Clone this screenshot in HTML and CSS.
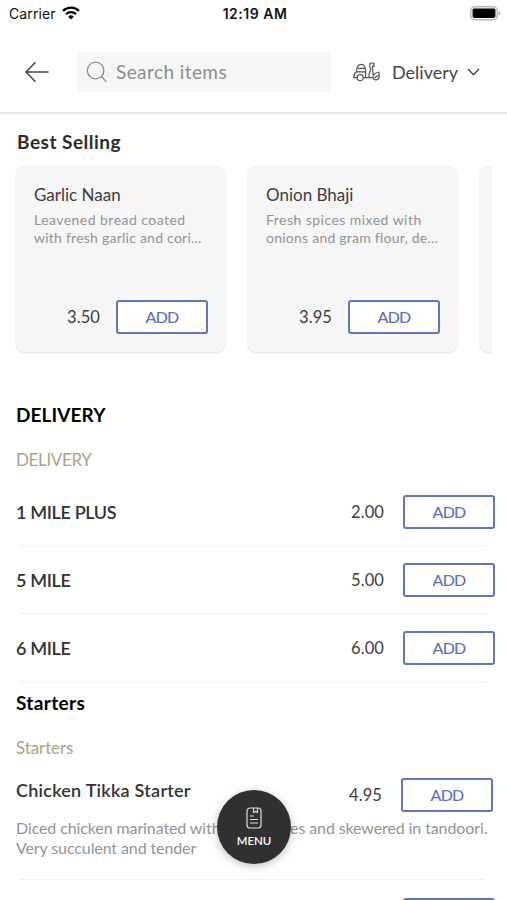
FILE: index.html
```html
<!DOCTYPE html>
<html lang="en">
<head>
<meta charset="utf-8">
<meta name="viewport" content="width=device-width, initial-scale=1">
<title>Menu</title>
<link rel="stylesheet" href="styles.css">
</head>
<body>
<div class="screen">
  <div class="status">
    <div class="carrier"><span>Carrier</span>
      <svg class="wifi" viewBox="0 0 18 14" width="18" height="14" fill="none" stroke="#000"><path d="M1 4.900a11.400 11.400 0 0 1 16 0" stroke-width="2.300"/><path d="M4 8.100a7.100 7.100 0 0 1 10 0" stroke-width="2.200"/><path d="M9 13.500 6.200 10.700a4 4 0 0 1 5.600 0z" fill="#000" stroke="none"/></svg>
    </div>
    <time class="clock">12:19 AM</time>
    <svg class="battery" viewBox="0 0 31 15" width="31" height="15"><rect x=".8" y=".8" width="26.400" height="13" rx="3.800" fill="#fff" stroke="#b8b8b8" stroke-width="1.500"/><rect x="2.600" y="2.500" width="22.800" height="9.600" rx="1.800"/><path d="M28.600 5v4.600q1.700-.7 1.700-2.300T28.600 5z" fill="#aaa"/></svg>
  </div>
  <header class="bar">
    <svg class="back" viewBox="0 0 26 22" width="26" height="22" fill="none" stroke="#444" stroke-width="1.400"><path d="M24.500 11H2M11.500 1.200 2 11l9.500 9.800"/></svg>
    <div class="search">
      <svg viewBox="0 0 22 22" width="22" height="22" fill="none" stroke="#8d8d8d" stroke-width="1.300"><circle cx="9.600" cy="9.500" r="8.300"/><path d="m15.400 15.600 5 5.100"/></svg>
      <span>Search items</span>
    </div>
    <div class="mode">
      <svg class="scooter" viewBox="0 0 27 20" width="27" height="20" fill="none" stroke="#555" stroke-width="1.200" stroke-linejoin="round"><path d="M3.500 9.800C3.500 5.500 5.300 2.400 8.300 2.400S12.600 5.500 12.600 9.800zM4.800 6.300h7.200M3.500 9.800C1.600 11 .8 13 .8 15.600h3.200M10.200 15.600h9.600M12.600 9.800v5.800M4.200 15.600q0-3 3-3t3 3M16 15.600v-3.200l1.800-5.200-1-2.400V1.600q2-1.200 4.200 0v2.800h-1.600l.7 8.200M19.800 15.600q.2-4.200 6-5.600l.4 3.200-4.800 2.400M4 15.600a3.200 3.200 0 0 0 6.400 0M19.800 15.600a3.100 3.100 0 0 0 6.200-2.200"/></svg>
      <span>Delivery</span>
      <svg class="chev" viewBox="0 0 13 8" width="13" height="8" fill="none" stroke="#444" stroke-width="1.400"><path d="m1 1 5.500 5.800L12 1"/></svg>
    </div>
  </header>
  <main>
    <h2 class="best">Best Selling</h2>
    <div class="cards">
      <article class="card">
        <h3>Garlic Naan</h3>
        <p><span class="wide">Leavened bread coated</span><br><span>with fresh garlic and cori...</span></p>
        <div class="buy"><span class="price">3.50</span><button class="add">ADD</button></div>
      </article>
      <article class="card">
        <h3>Onion Bhaji</h3>
        <p><span class="wide">Fresh spices mixed with</span><br><span>onions and gram flour, de...</span></p>
        <div class="buy"><span class="price">3.95</span><button class="add">ADD</button></div>
      </article>
      <article class="card"></article>
    </div>
    <section class="delivery">
      <h2 class="title caps">DELIVERY</h2>
      <div class="sub subcaps">DELIVERY</div>
      <div class="row"><h3>1 MILE PLUS</h3><span class="price">2.00</span><button class="add">ADD</button></div>
      <div class="row"><h3>5 MILE</h3><span class="price">5.00</span><button class="add">ADD</button></div>
      <div class="row"><h3>6 MILE</h3><span class="price">6.00</span><button class="add">ADD</button></div>
    </section>
    <section class="starters">
      <h2 class="title">Starters</h2>
      <div class="sub">Starters</div>
      <div class="dish">
        <div class="dish-head"><h3>Chicken Tikka Starter</h3><span class="price">4.95</span><button class="add">ADD</button></div>
        <p>Diced chicken marinated with fresh spices and skewered in tandoori.<br>Very succulent and tender</p>
      </div>
      <div class="next"></div>
    </section>
  </main>
  <button class="menu">
    <svg viewBox="0 0 16 22" width="16" height="22" fill="none" stroke="#ddd" stroke-width="1.200" stroke-linejoin="round"><path d="M4.500 1h7.500q3 0 3 3v14q0 3-3 3H4q-3 0-3-3V4.500Q1 1 4.500 1zM7.500 1v4.600l2-1.200 2 1.200V1M4 9h4M4 12.500h8M4 16h8"/></svg>
    <span>MENU</span>
  </button>
</div>
</body>
</html>
```
FILE: styles.css
```css
* { box-sizing: border-box; }
body { margin: 0; background: #fff; font-family: Lato, "Liberation Sans", sans-serif; color: #3d3d3d; }
h2, h3, p { margin: 0; }
.screen { position: relative; width: 507px; height: 900px; overflow: hidden; }
.status { display: grid; grid-template-columns: 1fr auto 1fr; align-items: center; height: 26px; padding: 0 6px 0 9px; font-family: Inter, sans-serif; font-size: 14px; color: #111; }
.carrier { display: flex; align-items: center; gap: 6px; }
.carrier span { letter-spacing: .1px; }
.clock { font-weight: 600; letter-spacing: .5px; }
.battery { justify-self: end; }
.bar { display: flex; align-items: center; height: 88px; padding: 5px 27px 0 24px; border-bottom: 2px solid #e6e6e6; }
.bar svg, .mode { flex: none; }
.search { flex: none; display: flex; align-items: center; gap: 8px; width: 254px; height: 40px; margin-left: 27px; padding-left: 9px; border-radius: 4px; background: #f6f6f6; color: #8d8d8d; font-size: 19px; letter-spacing: .42px; }
.mode { display: flex; align-items: center; margin-left: 22px; color: #444; font-size: 18px; }
.mode span { margin: 0 9px 0 12px; letter-spacing: 0; }
.best { margin: 17px 0 0 17px; font-size: 19px; line-height: 22px; font-weight: 700; letter-spacing: .5px; color: #2c2c2c; }
.cards { display: flex; gap: 23px; margin: 11px 15px 0; height: 192px; padding: 2px 1px; overflow: hidden; }
.card { flex: 0 0 209px; height: 186px; padding: 18px 17px 0 18px; border-radius: 8px; background: #f6f6f6; box-shadow: 0 1px 2px #ddd; }
.card h3 { font-size: 17px; line-height: 22px; font-weight: 400; }
.card p { margin-top: 5px; font-size: 14px; line-height: 18px; letter-spacing: .24px; color: #949494; white-space: nowrap; }
.card .wide { letter-spacing: .46px; }
.buy { display: flex; align-items: center; justify-content: flex-end; margin-top: 53px; }
.price { font-size: 16.500px; letter-spacing: .1px; }
.add { flex: none; width: 92px; height: 34px; margin-left: 16px; padding: 0 0 1px; border: 2px solid #6374c2; border-radius: 3px; background: #fff; color: #6070c4; font: 500 16px Lato, sans-serif; letter-spacing: -.7px; }
.delivery { padding: 47px 12px 0 16px; }
.title { font-size: 19px; line-height: 24px; font-weight: 700; letter-spacing: .35px; color: #000; }
.caps { letter-spacing: .1px; }
.sub { margin-top: 22px; font-size: 17px; line-height: 22px; letter-spacing: -.1px; color: #b0a283; }
.subcaps { letter-spacing: -.35px; }
.row { display: flex; align-items: center; height: 68px; position: relative; }
.delivery .row:nth-child(3) { margin-top: 7px; }
.row h3, .dish h3 { flex: 1; font-size: 18px; font-weight: 600; color: #333; }
.row h3 { letter-spacing: -.35px; }
.row .add { margin-left: 19px; }
.row::after, .dish::after { content: ""; position: absolute; left: 4px; right: 8px; bottom: 0; height: 1px; background: #f0f0f0; }
.starters { padding: 9px 14px 0 16px; }
.dish { position: relative; height: 121px; padding-top: 1px; }
.dish-head { display: flex; align-items: center; height: 70px; }
.dish-head .add { margin-left: 19px; }
.dish h3 { padding-bottom: 11px; letter-spacing: .25px; }
.dish p { margin-top: -12px; font-size: 16px; line-height: 19.500px; letter-spacing: -.11px; color: #949494; white-space: nowrap; }
.next { width: 92px; height: 34px; margin: 18px -2px 0 auto; border: 2px solid #6374c2; border-radius: 3px; }
.menu { position: absolute; left: 217px; top: 790px; width: 74px; height: 74px; padding: 0; border: 0; border-radius: 50%; background: #303030; box-shadow: 0 2px 8px rgba(0,0,0,.25); display: flex; flex-direction: column; align-items: center; justify-content: center; gap: 4px; color: #fff; font: 600 11.500px/15px Lato, sans-serif; }
```
